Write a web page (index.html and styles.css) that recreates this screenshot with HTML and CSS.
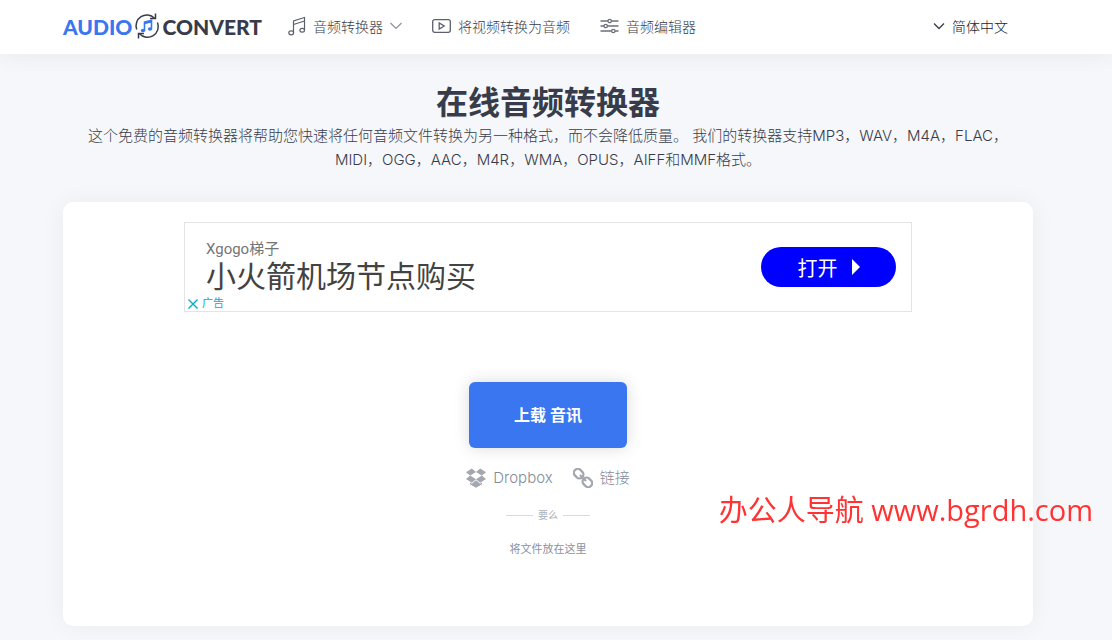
FILE: index.html
```html
<!DOCTYPE html>
<html lang="zh-CN">
<head>
  <meta charset="UTF-8">
  <title>在线音频转换器</title>
  <link rel="stylesheet" href="styles.css">
</head>
<body>

<header class="header">
  <div class="container header-inner">
    <a class="logo" href="#">
      <span class="logo-blue">AUDIO</span>
      <svg class="logo-icon" width="26" height="28" viewBox="0 0 26 28" fill="none">
        <path d="M2.700 17.500A10.800 10.800 0 0 1 20.500 6.200M23.500 10.500A10.800 10.800 0 0 1 5.500 21.800" stroke="#383c4a" stroke-width="1.500"/>
        <path d="M21.500 1.500v5h-5.500M4.500 26.500v-5h5.500" stroke="#383c4a" stroke-width="1.500"/>
        <path d="M10.500 18.500v-8.500l7-1.800v8.500M10.500 11.500l7-1.800" stroke="#3a76ef" stroke-width="1.600"/>
        <ellipse cx="9" cy="18.500" rx="2.200" ry="1.800" fill="#3a76ef"/>
        <ellipse cx="16" cy="17" rx="2.200" ry="1.800" fill="#3a76ef"/>
      </svg>
      <span>CONVERT</span>
    </a>
    <nav class="nav">
      <a class="nav-link" href="#">
        <svg width="18" height="20" viewBox="0 0 18 20" fill="none" stroke="#5c606d" stroke-width="1.200">
          <path d="M5.500 16.500V5L16.500 1.500v12.500M5.500 8.500L16.500 5"/>
          <ellipse cx="3.200" cy="16.800" rx="2.400" ry="2"/>
          <ellipse cx="14.200" cy="14.300" rx="2.300" ry="1.900"/>
        </svg>
        音频转换器
        <svg class="chevron" width="12" height="8" viewBox="0 0 12 8" fill="none" stroke="#8d909a" stroke-width="1.200"><path d="M.5 1L6 6.500 11.500 1"/></svg>
      </a>
      <a class="nav-link" href="#">
        <svg width="19" height="14" viewBox="0 0 19 14" fill="none" stroke="#5c606d" stroke-width="1.300">
          <rect x=".7" y=".7" width="17.600" height="12.600" rx="2"/>
          <path d="M7.200 4v6l5-3z"/>
        </svg>
        将视频转换为音频
      </a>
      <a class="nav-link" href="#">
        <svg width="19" height="16" viewBox="0 0 18 16" fill="none" stroke="#6c707c" stroke-width="1.300">
          <path d="M0 3h7.500M11 3h7M0 8h3.500M7 8h11M0 13h11M14.500 13H18"/>
          <circle cx="9.200" cy="3" r="1.700"/>
          <circle cx="5.200" cy="8" r="1.700"/>
          <circle cx="12.800" cy="13" r="1.700"/>
        </svg>
        音频编辑器
      </a>
    </nav>
    <button class="lang" type="button">
      <svg width="12" height="8" viewBox="0 0 12 8" fill="none" stroke="#383c4a" stroke-width="1.300"><path d="M1 1.500L6 6.500 11 1.500"/></svg>
      简体中文
    </button>
  </div>
</header>

<main class="main">
  <div class="container">
    <h1 class="title">在线音频转换器</h1>
    <p class="description">这个免费的音频转换器将帮助您快速将任何音频文件转换为另一种格式，而不会降低质量。 我们的转换器支持MP3，WAV，M4A，FLAC，MIDI，OGG，AAC，M4R，WMA，OPUS，AIFF和MMF格式。</p>

    <section class="card">
      <div class="ad">
        <div class="ad-text">
          <span class="ad-brand">Xgogo梯子</span>
          <span class="ad-title">小火箭机场节点购买</span>
        </div>
        <a class="ad-button" href="#">
          打开
          <svg width="8" height="16" viewBox="0 0 8 16"><path d="M0 0l8 8-8 8z" fill="#fff"/></svg>
        </a>
        <span class="ad-label">
          <svg width="10" height="10" viewBox="0 0 10 10" stroke="#00aecd" stroke-width="1.400"><path d="M.5.5l9 9M9.500.5l-9 9"/></svg>
          广告
        </span>
      </div>

      <div class="upload">
        <button class="upload-button" type="button">上载 音讯</button>
        <div class="sources">
          <a class="source" href="#">
            <svg width="20" height="20" viewBox="0 0 20 20" fill="#a3a8b0">
              <path d="M5.800.5L0 4.300l4.200 3.300L10 4zM14.200.5L10 4l5.800 3.600L20 4.300zM0 11l5.800 3.800L10 11.300 4.200 7.600zM20 11l-4.200-3.400-5.800 3.700 4.200 3.500zM10 12.200l-4.200 3.500-1.800-1.200v1.700l6 3.600 6-3.600v-1.700l-1.800 1.200z"/>
            </svg>
            Dropbox
          </a>
          <a class="source" href="#">
            <svg width="20" height="20" viewBox="0 0 20 20" fill="none" stroke="#a3a8b0" stroke-width="2.300">
              <rect x="-5" y="-3.900" width="10" height="7.800" rx="3.600" transform="translate(5.600 5.600) rotate(45)"/>
              <rect x="-5" y="-3.900" width="10" height="7.800" rx="3.600" transform="translate(14.400 14.400) rotate(45)"/>
              <path d="M7 7l6 6"/>
            </svg>
            链接
          </a>
        </div>
        <div class="divider">要么</div>
        <p class="drop-hint">将文件放在这里</p>
      </div>
    </section>
  </div>
</main>

<div class="watermark">办公人导航 www.bgrdh.com</div>

</body>
</html>
```

FILE: styles.css
```css
* {
  box-sizing: border-box;
}
body {
  margin: 0;
  min-height: 100vh;
  font-family: Inter, "Noto Sans CJK SC", sans-serif;
  font-size: 14px;
  color: #383c4a;
  background: #f5f7fb;
}
a {
  color: inherit;
  text-decoration: none;
}
button {
  font-family: inherit;
  border: none;
  cursor: pointer;
}
svg {
  flex-shrink: 0;
}
.container {
  max-width: 970px;
  margin: 0 auto;
}
.header {
  position: relative;
  padding: 0 16px 2px 0;
  background: #fff;
  box-shadow: 0 0 24px rgba(0, 0, 0, 0.07);
}
.header-inner {
  display: flex;
  align-items: center;
  height: 52px;
  padding-right: 25px;
}
.logo {
  display: flex;
  align-items: center;
  gap: 2px;
  font-family: Lato, sans-serif;
  font-size: 21px;
  font-weight: 900;
}
.logo-blue {
  color: #3a76ef;
}
.nav {
  display: flex;
  gap: 30px;
  margin-left: 26px;
  font-weight: 300;
}
.nav-link {
  display: flex;
  align-items: center;
  gap: 7px;
}
.lang {
  display: flex;
  align-items: center;
  gap: 7px;
  margin-left: auto;
  padding: 0;
  font-size: 14px;
  font-weight: 300;
  color: #20232c;
  background: none;
}
.main {
  padding: 28px 16px 14px 0;
}
.title {
  margin: 0;
  font-size: 32px;
  line-height: 42px;
  text-align: center;
}
.description {
  margin: 0;
  padding: 0 15px;
  font-size: 15px;
  font-weight: 300;
  line-height: 24px;
  text-align: center;
}
.card {
  margin-top: 30px;
  padding: 20px 20px 68px;
  background: #fff;
  border-radius: 10px;
  box-shadow: 0 0 24px rgba(0, 0, 0, 0.05);
}
.ad {
  position: relative;
  display: flex;
  align-items: center;
  justify-content: space-between;
  max-width: 728px;
  height: 90px;
  margin: 0 auto;
  padding: 0 15px 0 21px;
  border: 1px solid #e4e4e4;
}
.ad-text {
  display: flex;
  flex-direction: column;
  padding-top: 2px;
  font-family: Roboto, "Noto Sans CJK SC", sans-serif;
}
.ad-brand {
  font-size: 15px;
  line-height: 18px;
  color: #757575;
}
.ad-title {
  font-size: 30px;
  line-height: 38px;
  color: #434343;
}
.ad-button {
  display: flex;
  align-items: center;
  justify-content: center;
  gap: 14px;
  width: 135px;
  height: 40px;
  font-size: 20px;
  color: #fff;
  background: #0000ff;
  border-radius: 20px;
}
.ad-label {
  position: absolute;
  left: 3px;
  bottom: 0;
  display: flex;
  align-items: center;
  gap: 4px;
  font-size: 11px;
  line-height: 15px;
  color: #00aecd;
}
.upload {
  display: flex;
  flex-direction: column;
  align-items: center;
  margin-top: 70px;
}
.upload-button {
  padding: 20px 45px;
  font-size: 16px;
  font-weight: 700;
  line-height: 26px;
  color: #fff;
  background: #3a76ef;
  border-radius: 6px;
  box-shadow: 0 0 16px rgba(0, 0, 0, 0.15);
}
.sources {
  display: flex;
  gap: 20px;
  margin-top: 20px;
  line-height: 20px;
  color: #848b99;
}
.source {
  display: flex;
  align-items: center;
  gap: 7px;
  font-size: 15px;
  font-weight: 300;
}
.divider {
  display: flex;
  align-items: center;
  gap: 5px;
  margin-top: 18px;
  font-size: 10px;
  line-height: 18px;
  color: #a9b2c2;
}
.divider::before,
.divider::after {
  content: "";
  width: 27px;
  height: 1px;
  background: #d3dbe6;
}
.drop-hint {
  margin: 16px 0 0;
  font-size: 11px;
  line-height: 18px;
  color: #8b91a0;
}
.watermark {
  position: fixed;
  right: 19px;
  bottom: 110px;
  font-family: "Open Sans", "Noto Sans CJK SC", sans-serif;
  font-size: 29px;
  line-height: 40px;
  color: #ff3333;
}
```
